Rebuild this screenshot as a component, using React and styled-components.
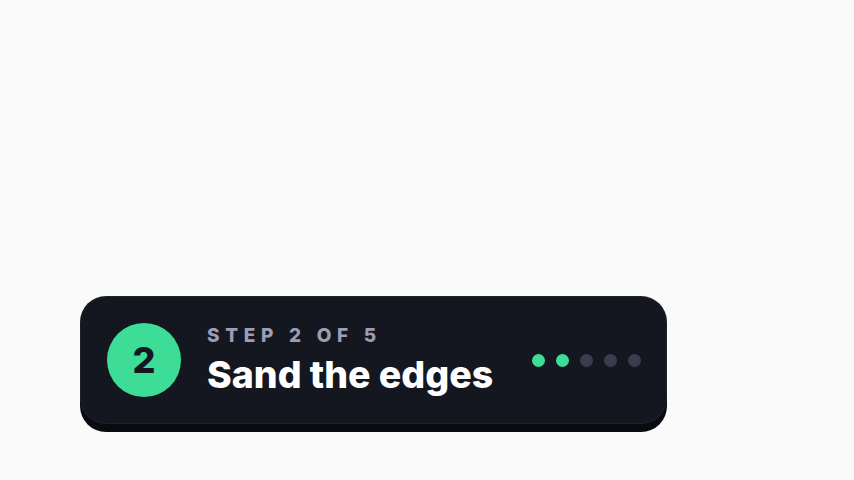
import React from "react";
import styled, { createGlobalStyle } from "styled-components";

const Global = createGlobalStyle`
  html, body { margin: 0; padding: 0; background: #fafafa; }
  body { font-family: Inter, "Noto Sans", sans-serif; }
`;

const Page = styled.div`
  min-height: 100vh;
  box-sizing: border-box;
  display: flex;
  align-items: flex-start;
  padding: 296px 0 0 80px;
`;

const Card = styled.div`
  box-sizing: border-box;
  width: 587px;
  display: flex;
  align-items: center;
  gap: 26px;
  padding: 26px 25px 26px 26px;
  background: #141720;
  border: 1px solid rgba(255, 255, 255, 0.05);
  border-radius: 26px;
  box-shadow: 0 8px 0 #0a0b10;
`;

const Badge = styled.div`
  flex: none;
  width: 74px;
  height: 74px;
  border-radius: 50%;
  background: #3ddc97;
  color: #141720;
  display: flex;
  align-items: center;
  justify-content: center;
  font-size: 36px;
  font-weight: 800;
  line-height: 1;
`;

const TextBlock = styled.div`
  flex: 1;
  display: flex;
  flex-direction: column;
  gap: 5px;
`;

const Eyebrow = styled.div`
  font-size: 19px;
  line-height: 24px;
  font-weight: 800;
  letter-spacing: 0.3em;
  color: #9b9db4;
`;

const Title = styled.div`
  font-size: 37.5px;
  line-height: 44px;
  font-weight: 800;
  letter-spacing: 0;
  color: #ffffff;
`;

const Dots = styled.div`
  flex: none;
  display: flex;
  gap: 11px;
`;

const Dot = styled.span`
  width: 13px;
  height: 13px;
  border-radius: 50%;
  background: ${(p) => (p.$done ? "#3ddc97" : "#3b3d4f")};
`;

export default function App() {
  const total = 5;
  const current = 2;
  return (
    <>
      <Global />
      <Page>
        <Card>
          <Badge>{current}</Badge>
          <TextBlock>
            <Eyebrow>STEP {current} OF {total}</Eyebrow>
            <Title>Sand the edges</Title>
          </TextBlock>
          <Dots>
            {Array.from({ length: total }, (_, i) => (
              <Dot key={i} $done={i < current} />
            ))}
          </Dots>
        </Card>
      </Page>
    </>
  );
}
